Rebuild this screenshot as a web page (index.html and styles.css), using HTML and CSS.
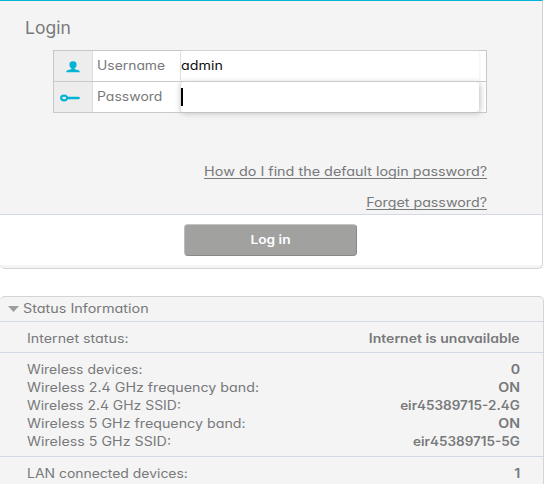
FILE: index.html
```html
<!DOCTYPE html>
<html lang="en">
<head>
<meta charset="utf-8">
<title>Login</title>
<link rel="stylesheet" href="styles.css">
</head>
<body>
<section class="login">
  <div class="login-body">
    <h1><span class="t title">Login</span></h1>
    <div class="fields">
      <div class="field">
        <div class="icon"><svg width="14" height="12" viewBox="0 0 14 12"><path d="M7 .3C4.700.3 3.500 1.300 3.500 3v1.300c0 1.500.9 2.600 2 3.100v.6L.4 9.700v1.600h13.200V9.700L8.500 8v-.6c1.100-.5 2-1.600 2-3.100V3C10.500 1.300 9.300.3 7 .3z" fill="#00b4d5"/></svg></div>
        <label class="label"><span class="t user">Username</span></label>
        <div class="input"><span class="t admin">admin</span></div>
      </div>
      <div class="field">
        <div class="icon key"><svg width="20" height="8" viewBox="0 0 20 8"><ellipse cx="4.200" cy="4" rx="3" ry="2.300" fill="none" stroke="#00b4d5" stroke-width="2.200"/><path d="M7.500 4H18.500" stroke="#00b4d5" stroke-width="2.600" stroke-linecap="round"/></svg></div>
        <label class="label"><span class="t pass">Password</span></label>
        <div class="input focus"><i class="caret"></i></div>
      </div>
    </div>
    <div class="links">
      <a><span class="t how">How do I find the default login password?</span></a>
      <a><span class="t forget">Forget password?</span></a>
    </div>
  </div>
  <div class="actions"><button><span class="t btn">Log in</span></button></div>
</section>
<section class="status">
  <div class="head"><svg width="11" height="6" viewBox="0 0 11 6"><path d="M0 0h11L5.500 6z" fill="#9d9f9e"/></svg><span class="t heading">Status Information</span></div>
  <div class="group"><div class="row"><span class="t">Internet status:</span><b class="t unavailable">Internet is unavailable</b></div></div>
  <div class="group">
    <div class="row"><span class="t tight">Wireless devices:</span><b class="t">0</b></div>
    <div class="row"><span class="t">Wireless 2.4 GHz frequency band:</span><b class="t">ON</b></div>
    <div class="row"><span class="t tight">Wireless 2.4 GHz SSID:</span><b class="t ssid">eir45389715-2.4G</b></div>
    <div class="row"><span class="t">Wireless 5 GHz frequency band:</span><b class="t">ON</b></div>
    <div class="row"><span class="t">Wireless 5 GHz SSID:</span><b class="t ssid">eir45389715-5G</b></div>
  </div>
  <div class="group"><div class="row"><span class="t tight">LAN connected devices:</span><b class="t">1</b></div></div>
</section>
</body>
</html>
```
FILE: styles.css
```css
* { box-sizing: border-box; }
body { margin: 0; height: 484px; overflow: hidden; background: #fff; color: #78797b; font: 12.5px/18px Inter, "Liberation Sans", sans-serif; font-feature-settings: "cv11", "cv02"; }
.t { display: inline-block; white-space: nowrap; transform: scaleX(1.14); transform-origin: left center; }
.title { transform: scaleX(1.03); }
.user { transform: scaleX(1.11); }
.pass { transform: scaleX(1.12); }
.how { transform: scaleX(1.15); }
.tight { transform: scaleX(1.115); }
.heading, .unavailable { transform: scaleX(1.12); }
.heading { transform: scaleX(1.15); }
.ssid { transform: scaleX(1.08); }
.login { width: 543px; height: 269px; background: #f4f4f4; border: 1px solid #d4d4d5; border-top-color: #00b4d5; border-left: 0; border-radius: 0 0 5px 5px; }
.login-body { height: 213px; padding-top: 15px; }
h1 { margin: 0 0 10px 25px; font-size: 17px; line-height: 24px; font-weight: 400; }
.fields { width: 434px; height: 63px; margin-left: 53px; border: 1px solid #c8c8c8; background: #fff; }
.field { display: flex; height: 30px; }
.field + .field { height: 31px; border-top: 1px solid #c8c8c8; }
.icon { width: 39px; background: #ededed; border-right: 1px solid #dedede; display: flex; align-items: center; justify-content: center; padding-top: 2px; }
.key { padding: 2px 7px 0 0; }
.label { width: 87px; padding: 6px 0 0 4px; }
.input { width: 299px; background: #fff; border-left: 1px solid #dedede; border-radius: 3px; color: #111; padding-top: 6px; box-shadow: 1px 0 2px #f3f3f3; }
.focus { padding: 6px 0 0; box-shadow: 1px 1px 6px #bbb; }
.caret { display: block; width: 1.5px; height: 18px; background: #000; }
.links { width: 487px; padding-top: 50px; display: flex; flex-direction: column; align-items: flex-end; gap: 13px; }
.links .t, .row b { transform-origin: right center; }
.links .t { text-decoration: underline; text-underline-offset: 2px; text-decoration-skip-ink: none; }
.links a { height: 18px; }
.actions { height: 51px; border-top: 1px solid #d2d9e5; background: #fff; padding: 9px 0 0 184px; }
button { display: block; width: 173px; height: 32px; padding: 0; background: #a1a19f; border: 1px solid #888; border-top-color: #c4c4c4; border-left-color: #bbb; border-radius: 4px; color: #fff; font: 600 12px/18px Inter, sans-serif; }
.btn { transform-origin: center; }
.status { width: 544px; height: 200px; margin-top: 27px; background: #f4f4f4; border: 1px solid #d4d4d5; border-left: 0; border-radius: 5px 5px 0 0; }
.head { height: 24px; display: flex; align-items: center; gap: 3.5px; padding-left: 8px; }
.group { border-top: 1px solid #d2d9e5; padding: 8px 23px 4px 26.5px; }
.group + .group { padding-bottom: 5px; }
.row { display: flex; justify-content: space-between; height: 18px; }
.row b { font-weight: 600; }
```
